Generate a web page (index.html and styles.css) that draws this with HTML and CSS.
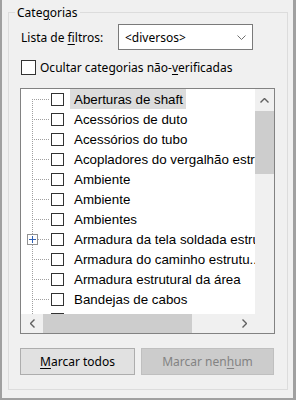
FILE: index.html
```html
<!DOCTYPE html>
<html lang="pt-BR">
<head>
  <meta charset="UTF-8">
  <title>Categorias</title>
  <link rel="stylesheet" href="styles.css">
</head>
<body>
  <div class="dialog">
    <fieldset class="group">
      <legend>Cate<u>g</u>orias</legend>

      <div class="filter-row">
        <span class="filter-label">Lista de <u>f</u>iltros:</span>
        <div class="combo">
          <span>&lt;diversos&gt;</span>
          <svg width="9" height="5" viewBox="0 0 9 5"><polyline points="0.5,0.5 4.5,4.5 8.5,0.5" fill="none" stroke="#707070" stroke-width="1"/></svg>
        </div>
      </div>

      <div class="check-row">
        <span class="check big"></span>
        <span class="check-label">Ocultar categorias não-<u>v</u>erificadas</span>
      </div>

      <div class="tree">
        <div class="viewport">
          <div class="row first sel"><span class="branch"></span><span class="check"></span><span class="name">Aberturas de shaft</span></div>
          <div class="row"><span class="branch"></span><span class="check"></span><span class="name">Acessórios de duto</span></div>
          <div class="row"><span class="branch"></span><span class="check"></span><span class="name">Acessórios do tubo</span></div>
          <div class="row"><span class="branch"></span><span class="check"></span><span class="name">Acopladores do vergalhão estrutural</span></div>
          <div class="row"><span class="branch"></span><span class="check"></span><span class="name">Ambiente</span></div>
          <div class="row"><span class="branch"></span><span class="check"></span><span class="name">Ambiente</span></div>
          <div class="row"><span class="branch"></span><span class="check"></span><span class="name">Ambientes</span></div>
          <div class="row"><span class="branch"><span class="plus"></span></span><span class="check"></span><span class="name">Armadura da tela soldada estrutural</span></div>
          <div class="row"><span class="branch"></span><span class="check"></span><span class="name">Armadura do caminho estrutu...</span></div>
          <div class="row"><span class="branch"></span><span class="check"></span><span class="name">Armadura estrutural da área</span></div>
          <div class="row"><span class="branch"></span><span class="check"></span><span class="name">Bandejas de cabos</span></div>
          <div class="row"><span class="branch"></span><span class="check"></span><span class="name">Conexões da bandeja de cabos</span></div>
        </div>
        <div class="vscroll">
          <div class="arrow v-arrow">
            <svg width="9" height="5" viewBox="0 0 9 5"><polyline points="0.5,4.5 4.5,0.5 8.5,4.5" fill="none" stroke="#606060" stroke-width="1.4"/></svg>
          </div>
          <div class="vthumb"></div>
        </div>
        <div class="hscroll">
          <div class="arrow h-arrow">
            <svg width="5" height="9" viewBox="0 0 5 9"><polyline points="4.5,0.5 0.5,4.5 4.5,8.5" fill="none" stroke="#606060" stroke-width="1.4"/></svg>
          </div>
          <div class="hthumb"></div>
          <div class="arrow h-arrow right">
            <svg width="5" height="9" viewBox="0 0 5 9"><polyline points="0.5,0.5 4.5,4.5 0.5,8.5" fill="none" stroke="#606060" stroke-width="1.4"/></svg>
          </div>
        </div>
        <div class="corner"></div>
      </div>

      <div class="buttons">
        <button class="btn all"><u>M</u>arcar todos</button>
        <button class="btn none" disabled>Marcar nen<u>h</u>um</button>
      </div>
    </fieldset>
  </div>
</body>
</html>
```

FILE: styles.css
```css
* { box-sizing: border-box; }
body {
  margin: 0;
  background: #f0f0f0;
  font-family: "Noto Sans", "Open Sans", sans-serif;
  font-size: 12px;
  color: #000;
}
u { text-underline-offset: 2px; }

.dialog {
  width: 296px;
  height: 400px;
  padding: 4px 5px 0 6px;
  border-left: 2px solid #a0a0a0;
  border-right: 3px solid #a0a0a0;
  border-bottom: 2px solid #a0a0a0;
}
.group {
  margin: 0;
  min-width: 0;
  border: 1px solid #dcdcdc;
  padding: 3px 12px 14px 11px;
}
.group legend {
  margin-left: -5px;
  padding: 0 2px;
  line-height: 17px;
}

.filter-row {
  display: flex;
  align-items: center;
  height: 26px;
}
.filter-label {
  width: 98px;
  padding-left: 1px;
}
.combo {
  width: 135px;
  height: 26px;
  border: 1px solid #7a7a7a;
  background: #fff;
  display: flex;
  align-items: center;
  justify-content: space-between;
  padding: 0 6px;
}

.check-row {
  display: flex;
  align-items: center;
  height: 15px;
  margin-top: 10px;
}
.check {
  flex: none;
  width: 13px;
  height: 13px;
  border: 1px solid #333;
  background: #fff;
}
.check.big {
  width: 15px;
  height: 15px;
  margin-left: 1px;
}
.check-label { margin-left: 4px; }

.tree {
  margin-top: 13px;
  height: 246px;
  border: 1px solid #828282;
  background: #fff;
  display: grid;
  grid-template-columns: 234px 19px;
  grid-template-rows: 225px 19px;
}
.viewport {
  overflow: hidden;
}
.row {
  display: flex;
  align-items: center;
  height: 20px;
  white-space: nowrap;
}
.branch {
  flex: none;
  display: flex;
  align-items: center;
  width: 19px;
  height: 20px;
  margin-left: 11px;
  background:
    repeating-linear-gradient(to bottom, #a0a0a0 0 1px, transparent 1px 2px) 0 0 / 1px 100% no-repeat,
    repeating-linear-gradient(to right, #a0a0a0 0 1px, transparent 1px 2px) 0 10px / 17px 1px no-repeat;
}
.row.first .branch {
  background:
    repeating-linear-gradient(to bottom, #a0a0a0 0 1px, transparent 1px 2px) 0 10px / 1px 10px no-repeat,
    repeating-linear-gradient(to right, #a0a0a0 0 1px, transparent 1px 2px) 0 10px / 17px 1px no-repeat;
}
.plus {
  width: 11px;
  height: 11px;
  margin-left: -5px;
  border: 1px solid #919191;
  background:
    linear-gradient(#2f5fb3, #2f5fb3) center / 7px 1px no-repeat,
    linear-gradient(#2f5fb3, #2f5fb3) center / 1px 7px no-repeat,
    #fff;
}
.name {
  margin-left: 6px;
  padding: 0 3px 0 4px;
  height: 20px;
  line-height: 21px;
  font-family: "Liberation Sans", Arial, sans-serif;
  font-size: 13.33px;
}
.row.sel .name { background: #dcdcdc; }

.vscroll {
  background: #f0f0f0;
  display: flex;
  flex-direction: column;
}
.arrow {
  display: flex;
  align-items: center;
  justify-content: center;
  flex: none;
}
.v-arrow { height: 22px; }
.vthumb {
  height: 63px;
  background: #cdcdcd;
}
.hscroll {
  background: #f0f0f0;
  display: flex;
}
.h-arrow { width: 22px; }
.h-arrow.right { margin-left: auto; }
.hthumb {
  width: 149px;
  background: #cdcdcd;
}
.corner { background: #f0f0f0; }

.buttons {
  display: flex;
  gap: 6px;
  margin-top: 14px;
}
.btn {
  height: 27px;
  padding: 0;
  font-family: inherit;
  font-size: 12px;
  color: #000;
  background: #e1e1e1;
  border: 1px solid #adadad;
}
.btn.all { width: 115px; }
.btn.none {
  width: 133px;
  background: #cccccc;
  border-color: #bfbfbf;
  color: #838383;
}
```
